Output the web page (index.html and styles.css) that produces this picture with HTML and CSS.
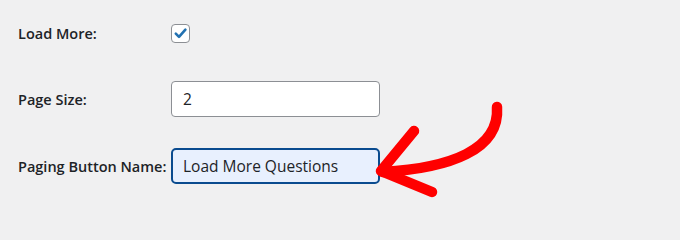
FILE: index.html
```html
<!DOCTYPE html>
<html>
<head>
<meta charset="utf-8">
<link rel="stylesheet" href="styles.css">
</head>
<body>
<div class="form">
  <div class="row row-first">
    <div class="label">Load More:</div>
    <span class="checkbox">
      <svg width="15" height="15" viewBox="0 0 15 15"><path d="M2.8 7.6 L6 10.8 L12.4 3.6" fill="none" stroke="#2271b1" stroke-width="2.6" stroke-linecap="round" stroke-linejoin="round"/></svg>
    </span>
  </div>
  <div class="row row-second">
    <div class="label">Page Size:</div>
    <input class="field" type="text" value="2">
  </div>
  <div class="row row-third">
    <div class="label">Paging Button Name:</div>
    <input class="field field-focus" type="text" value="Load More Questions">
  </div>
</div>
<svg class="arrow" width="680" height="208" viewBox="0 0 680 208">
  <g fill="none" stroke="#ff0000" stroke-width="10.5" stroke-linecap="round" stroke-linejoin="round">
    <path d="M497 107 C500 150 450 168 383 172"/>
    <path d="M414 131 L381 171 L432 192"/>
  </g>
</svg>
</body>
</html>
```
FILE: styles.css
```css
html, body {
  margin: 0;
  padding: 0;
  background: #f0f0f1;
}
body {
  width: 680px;
  height: 208px;
  overflow: hidden;
  position: relative;
  font-family: "Open Sans", "Noto Sans", sans-serif;
  color: #1d2327;
}
.form {
  padding-left: 18px;
  display: flex;
  flex-direction: column;
}
.row {
  display: flex;
  align-items: center;
  height: 36px;
}
.row-first { margin-top: 15px; }
.row-second { margin-top: 30px; }
.row-third { margin-top: 31px; }
.label {
  width: 153px;
  font-size: 14.5px;
  font-weight: 600;
}
.checkbox {
  width: 17px;
  height: 17px;
  border: 1px solid #8c8f94;
  border-radius: 4px;
  background: #fff;
  display: flex;
  align-items: center;
  justify-content: center;
  box-sizing: content-box;
}
.field {
  box-sizing: border-box;
  width: 209px;
  height: 36px;
  margin: 0;
  border: 1px solid #8c8f94;
  border-radius: 4px;
  background: #fff;
  padding: 0 0 0 11px;
  font-family: "Open Sans", "Noto Sans", sans-serif;
  font-size: 15.5px;
  color: #1d2327;
  outline: none;
}
.field-focus {
  border: 2px solid #0a4b8f;
  border-radius: 5px;
  padding-left: 10px;
  background: #e8f0fe;
}
.arrow {
  position: absolute;
  left: 0;
  top: 0;
}
```
